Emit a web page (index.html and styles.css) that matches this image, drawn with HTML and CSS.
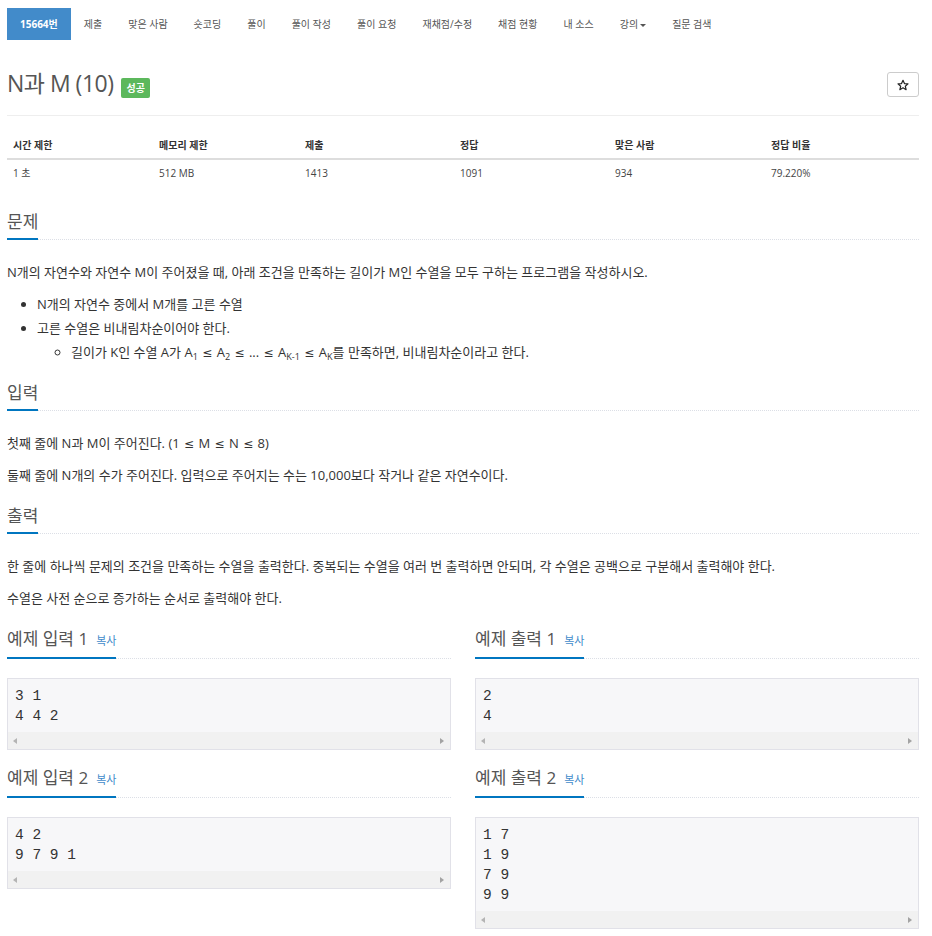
FILE: index.html
```html
<!DOCTYPE html>
<html lang="ko">
<head>
<meta charset="utf-8">
<title>N과 M (10)</title>
<link rel="stylesheet" href="styles.css">
</head>
<body>
<div class="page">
  <ul class="tabs">
    <li class="active"><a>15664번</a></li>
    <li><a>제출</a></li>
    <li><a>맞은 사람</a></li>
    <li><a>숏코딩</a></li>
    <li><a>풀이</a></li>
    <li><a>풀이 작성</a></li>
    <li><a>풀이 요청</a></li>
    <li><a>재채점/수정</a></li>
    <li><a>채점 현황</a></li>
    <li><a>내 소스</a></li>
    <li><a>강의<span class="caret"></span></a></li>
    <li><a>질문 검색</a></li>
  </ul>

  <div class="title-row">
    <h1 class="title"><span>N과 M (10)</span><span class="badge">성공</span></h1>
    <button class="star" aria-label="즐겨찾기"><svg width="12" height="12" viewBox="0 0 24 24"><path d="M12 2.5l2.9 6.6 7.1.6-5.4 4.7 1.6 7-6.2-3.7-6.2 3.7 1.6-7L2 9.7l7.1-.6z" fill="none" stroke="#222" stroke-width="2.4" stroke-linejoin="round"/></svg></button>
  </div>
  <hr class="rule">

  <table class="info">
    <thead>
      <tr><th class="c1">시간 제한</th><th class="c2">메모리 제한</th><th class="c3">제출</th><th class="c4">정답</th><th class="c5">맞은 사람</th><th class="c6">정답 비율</th></tr>
    </thead>
    <tbody>
      <tr><td>1 초</td><td>512 MB</td><td>1413</td><td>1091</td><td>934</td><td>79.220%</td></tr>
    </tbody>
  </table>

  <section class="sec first">
    <h2 class="headline"><span>문제</span></h2>
    <div class="text">
      <p>N개의 자연수와 자연수 M이 주어졌을 때, 아래 조건을 만족하는 길이가 M인 수열을 모두 구하는 프로그램을 작성하시오.</p>
      <ul class="bullets">
        <li>N개의 자연수 중에서 M개를 고른 수열</li>
        <li>고른 수열은 비내림차순이어야 한다.
          <ul class="sub">
            <li>길이가 K인 수열 A가 A<sub>1</sub> <span class="op">≤</span> A<sub>2</sub> <span class="op">≤</span> ... <span class="op">≤</span> A<sub>K-1</sub> <span class="op">≤</span> A<sub>K</sub>를 만족하면, 비내림차순이라고 한다.</li>
          </ul>
        </li>
      </ul>
    </div>
  </section>

  <section class="sec">
    <h2 class="headline"><span>입력</span></h2>
    <div class="text">
      <p>첫째 줄에 N과 M이 주어진다. (1 <span class="op">≤</span> M <span class="op">≤</span> N <span class="op">≤</span> 8)</p>
      <p>둘째 줄에 N개의 수가 주어진다. 입력으로 주어지는 수는 10,000보다 작거나 같은 자연수이다.</p>
    </div>
  </section>

  <section class="sec">
    <h2 class="headline"><span>출력</span></h2>
    <div class="text">
      <p>한 줄에 하나씩 문제의 조건을 만족하는 수열을 출력한다. 중복되는 수열을 여러 번 출력하면 안되며, 각 수열은 공백으로 구분해서 출력해야 한다.</p>
      <p>수열은 사전 순으로 증가하는 순서로 출력해야 한다.</p>
    </div>
  </section>

  <div class="samples">
    <section class="sample">
      <h2 class="headline"><span>예제 입력 1 <a class="copy">복사</a></span></h2>
      <div class="box"><pre>3 1
4 4 2</pre><div class="hscroll"><i class="arr left"></i><i class="arr right"></i></div></div>
    </section>
    <section class="sample">
      <h2 class="headline"><span>예제 출력 1 <a class="copy">복사</a></span></h2>
      <div class="box"><pre>2
4</pre><div class="hscroll"><i class="arr left"></i><i class="arr right"></i></div></div>
    </section>
    <section class="sample">
      <h2 class="headline"><span>예제 입력 2 <a class="copy">복사</a></span></h2>
      <div class="box"><pre>4 2
9 7 9 1</pre><div class="hscroll"><i class="arr left"></i><i class="arr right"></i></div></div>
    </section>
    <section class="sample">
      <h2 class="headline"><span>예제 출력 2 <a class="copy">복사</a></span></h2>
      <div class="box"><pre>1 7
1 9
7 9
9 9</pre><div class="hscroll"><i class="arr left"></i><i class="arr right"></i></div></div>
    </section>
  </div>
</div>
</body>
</html>
```

FILE: styles.css
```css
* { box-sizing: border-box; }
html, body { margin: 0; padding: 0; background: #fff; }
body {
  font-family: "Open Sans", "Noto Sans CJK KR", sans-serif;
  color: #333;
  font-size: 13px;
}
.page { padding: 8px 13px 0 7px; width: 932px; }

/* tabs */
.tabs { display: flex; list-style: none; margin: 0; padding: 0; }
.tabs li a {
  display: block;
  padding: 0 13px;
  line-height: 32px;
  height: 32px;
  font-size: 10px;
  color: #555;
  cursor: pointer;
}
.tabs li.active a { background: #428bca; color: #fff; font-weight: 700; }
.caret {
  display: inline-block;
  width: 0; height: 0;
  margin-left: 2px;
  vertical-align: middle;
  border-top: 3px solid #555;
  border-left: 3px solid transparent;
  border-right: 3px solid transparent;
}

/* title */
.title-row { display: flex; align-items: center; margin-top: 32px; height: 25px; }
.title {
  display: flex; align-items: baseline;
  margin: 0;
  font-size: 23px; line-height: 25px; font-weight: 400;
  letter-spacing: -0.5px;
  color: #555;
}
.badge {
  display: inline-block;
  margin-left: 8px;
  padding: 0 5px;
  height: 20px;
  line-height: 20px;
  font-size: 10px; font-weight: 700;
  letter-spacing: 0;
  color: #fff;
  background: #5cb85c;
  border-radius: 2px;
}
.star {
  margin-left: auto;
  width: 32px; height: 25px;
  border: 1px solid #ccc; border-radius: 3px;
  background: #fff;
  padding: 0;
  display: flex; align-items: center; justify-content: center;
}
.star svg { display: block; }
.rule { border: 0; border-top: 1px solid #eee; margin: 18px 0 0; }

/* table */
.info { width: 912px; border-collapse: collapse; margin-top: 16px; font-size: 10px; }
.info th, .info td { text-align: left; padding: 6px 6px; line-height: 14px; }
.info th { font-weight: 700; color: #333; border-bottom: 2px solid #ddd; }
.info td { color: #444; }
.c1, .c2 { width: 146px; }
.c3, .c4 { width: 155px; }
.c5 { width: 156px; }
.c6 { width: 154px; }

/* sections */
.sec { margin-top: 17px; }
.sec.first { margin-top: 24px; }
.headline {
  display: flex; align-items: flex-end;
  margin: 0;
  font-size: 17px; line-height: 24px; font-weight: 400;
  color: #555;
  border-bottom: 1px dotted #dcdfe6;
}
.headline > span {
  display: flex; align-items: baseline;
  padding-bottom: 4px;
  border-bottom: 2px solid #0076c0;
  margin-bottom: -1px;
}
.copy { font-size: 11px; color: #428bca; margin-left: 8px; cursor: pointer; }

.text { margin-top: 20px; font-size: 13px; line-height: 24px; color: #333; }
.text p { margin: 0 0 8px; }
.text p:last-child { margin-bottom: 0; }
.bullets { margin: 0; padding-left: 30px; list-style: disc; }
.sub { margin: 0; padding-left: 34px; list-style: circle; }
sub { font-size: 70%; line-height: 0; vertical-align: -3px; }
.op { font-family: "DejaVu Sans", sans-serif; font-size: 12px; line-height: 1; padding: 0 1px; }

/* samples */
.samples {
  display: grid;
  grid-template-columns: 444px 444px;
  column-gap: 24px;
  row-gap: 16px;
  margin-top: 17px;
}
.box {
  margin-top: 19px;
  border: 1px solid #e1e1e8;
  background: #f7f7f9;
}
.box pre {
  margin: 0;
  padding: 7px 7px 6px;
  font-family: "Liberation Mono", monospace;
  font-size: 14.5px;
  line-height: 20px;
  color: #333;
}
.hscroll {
  height: 17px;
  background: #f1f1f1;
  display: flex; align-items: center; justify-content: space-between;
  padding: 0 6px 0 5px;
}
.arr { display: block; width: 0; height: 0; border-top: 3.5px solid transparent; border-bottom: 3.5px solid transparent; }
.arr.left { border-right: 4px solid #b4b4b4; }
.arr.right { border-left: 4px solid #a3a3a3; }
```
